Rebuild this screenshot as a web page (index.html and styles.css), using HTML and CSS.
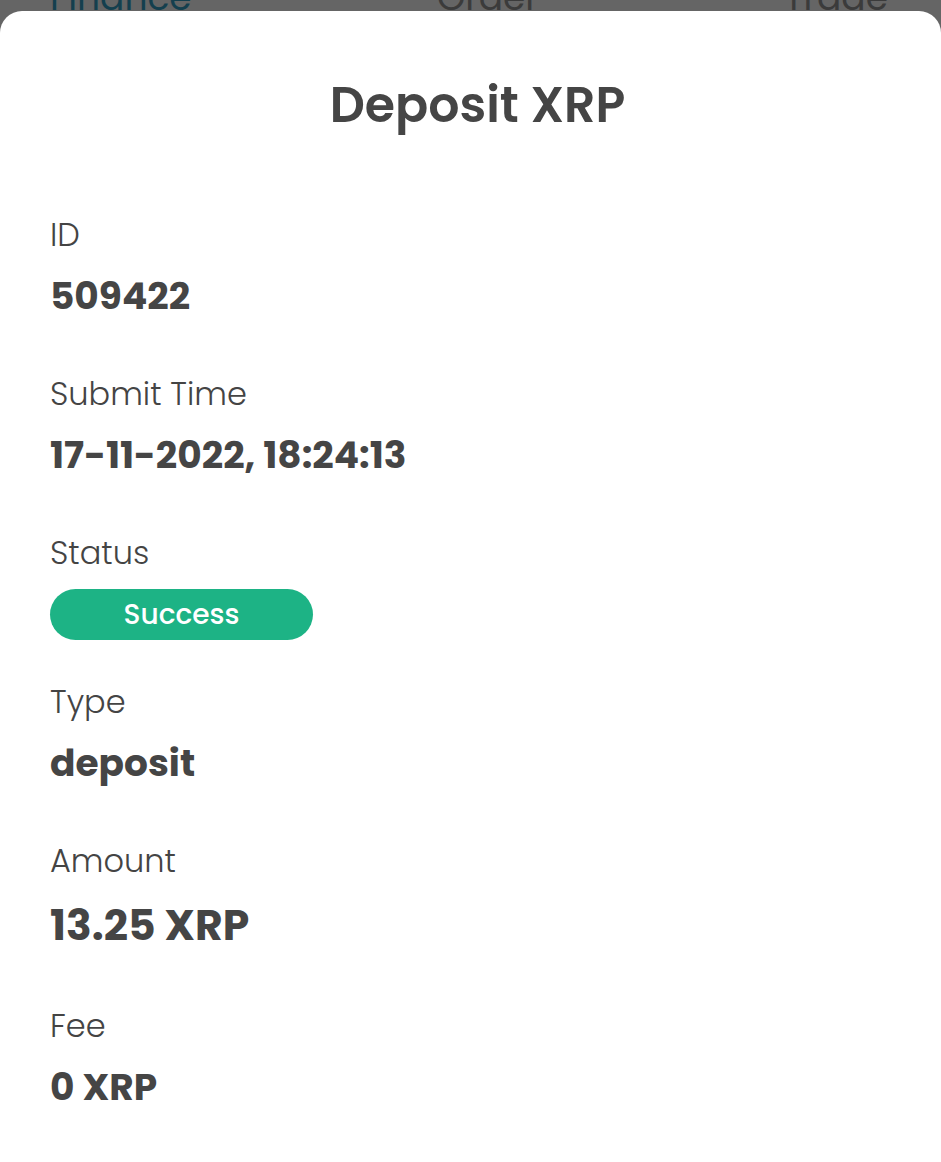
FILE: index.html
```html
<!DOCTYPE html>
<html lang="en">
<head>
    <meta charset="UTF-8">
    <meta name="viewport" content="width=device-width, initial-scale=1.0">
    <title>Deposit XRP</title>
    <link rel="stylesheet" href="styles.css">
</head>
<body>
<div class="tabs">
    <span class="tab active">Finance</span>
    <span class="tab">Order</span>
    <span class="tab">Trade</span>
</div>
<div class="sheet">
    <h1>Deposit XRP</h1>
    <div class="detail-list">
        <div class="detail">
            <div class="label">ID</div>
            <div class="value">509422</div>
        </div>
        <div class="detail">
            <div class="label">Submit Time</div>
            <div class="value">17-11-2022, 18:24:13</div>
        </div>
        <div class="detail status">
            <div class="label">Status</div>
            <div class="badge">Success</div>
        </div>
        <div class="detail">
            <div class="label">Type</div>
            <div class="value">deposit</div>
        </div>
        <div class="detail">
            <div class="label">Amount</div>
            <div class="value large">13.25 XRP</div>
        </div>
        <div class="detail">
            <div class="label">Fee</div>
            <div class="value">0 XRP</div>
        </div>
    </div>
</div>
</body>
</html>
```

FILE: styles.css
```css
body {
    font-family: "Poppins", Inter, "Noto Sans", sans-serif;
    background-color: #656565;
    color: #454545;
    margin: 0;
    padding: 0;
    min-height: 100vh;
    display: flex;
    flex-direction: column;
}

/* tabs behind the sheet */
.tabs {
    flex-shrink: 0;
    height: 11px;
    overflow: hidden;
    display: flex;
    justify-content: space-between;
    align-items: flex-end;
    padding: 0 53px 0 50px;
}

.tab {
    font-size: 36px;
    line-height: 27px;
    color: #3b3b3b;
}

.tab.active {
    color: #143f4e;
}

/* bottom sheet */
.sheet {
    flex: 1;
    background-color: #ffffff;
    border-radius: 22px 22px 0 0;
    padding: 0 50px;
}

.sheet h1 {
    margin: 0;
    padding: 62px 0 0 14px;
    text-align: center;
    font-size: 49px;
    font-weight: 600;
    line-height: 64px;
}

.detail-list {
    margin-top: 78px;
    display: flex;
    flex-direction: column;
}

.detail {
    display: flex;
    flex-direction: column;
    gap: 18px;
    margin-bottom: 55px;
}

.detail.status {
    gap: 16px;
    margin-bottom: 42px;
}

.label {
    font-size: 32px;
    line-height: 40px;
    font-weight: 300;
    color: #444444;
}

.value {
    font-size: 37.5px;
    line-height: 46px;
    font-weight: 700;
}

.value.large {
    font-size: 42.5px;
    line-height: 52px;
}

.badge {
    width: 263px;
    height: 51px;
    border-radius: 26px;
    background-color: #1db385;
    color: #ffffff;
    font-size: 28px;
    font-weight: 500;
    display: flex;
    align-items: center;
    justify-content: center;
}
```
